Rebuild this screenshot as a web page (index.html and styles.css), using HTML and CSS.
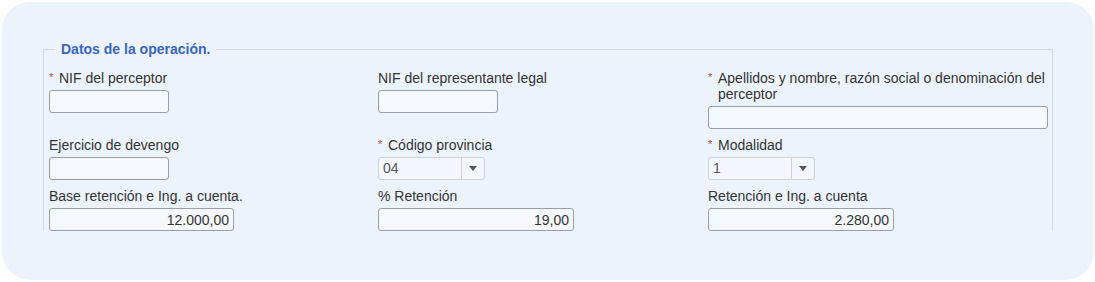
FILE: index.html
```html
<!DOCTYPE html>
<html lang="es">

<head>
    <meta charset="UTF-8">
    <meta name="viewport" content="width=device-width, initial-scale=1.0">
    <title>Datos de la operación</title>
    <link rel="stylesheet" href="styles.css">
</head>

<body>
    <div class="card">
        <fieldset class="group">
            <legend class="group__title">Datos de la operación.</legend>
            <div class="group__grid">
                <div class="field">
                    <label class="field__label"><span class="req">*</span><span>NIF del perceptor</span></label>
                    <input type="text" class="field__input field__input--short">
                </div>
                <div class="field">
                    <label class="field__label"><span>NIF del representante legal</span></label>
                    <input type="text" class="field__input field__input--short">
                </div>
                <div class="field">
                    <label class="field__label"><span class="req">*</span><span>Apellidos y nombre, razón social o denominación del perceptor</span></label>
                    <input type="text" class="field__input field__input--wide">
                </div>

                <div class="field">
                    <label class="field__label"><span>Ejercicio de devengo</span></label>
                    <input type="text" class="field__input field__input--short">
                </div>
                <div class="field">
                    <label class="field__label"><span class="req">*</span><span>Código provincia</span></label>
                    <div class="combo">
                        <span class="combo__value">04</span>
                        <span class="combo__arrow">
                            <svg width="8" height="5" viewBox="0 0 8 5"><path d="M0 0 L8 0 L4 5 Z" fill="#555"/></svg>
                        </span>
                    </div>
                </div>
                <div class="field">
                    <label class="field__label"><span class="req">*</span><span>Modalidad</span></label>
                    <div class="combo">
                        <span class="combo__value">1</span>
                        <span class="combo__arrow">
                            <svg width="8" height="5" viewBox="0 0 8 5"><path d="M0 0 L8 0 L4 5 Z" fill="#555"/></svg>
                        </span>
                    </div>
                </div>

                <div class="field">
                    <label class="field__label"><span>Base retención e Ing. a cuenta.</span></label>
                    <input type="text" class="field__input field__input--num" style="width: 185px" value="12.000,00">
                </div>
                <div class="field">
                    <label class="field__label"><span>% Retención</span></label>
                    <input type="text" class="field__input field__input--num" style="width: 196px" value="19,00">
                </div>
                <div class="field">
                    <label class="field__label"><span>Retención e Ing. a cuenta</span></label>
                    <input type="text" class="field__input field__input--num" style="width: 186px" value="2.280,00">
                </div>
            </div>
        </fieldset>
    </div>
</body>

</html>
```

FILE: styles.css
```css
body {
    margin: 0;
    padding: 0;
    background-color: #fff;
    color: #333;
    font-family: 'Liberation Sans', Arial, sans-serif;
    font-size: 14px;
}

.card {
    margin: 2px 0 0 2px;
    width: 1092px;
    height: 278px;
    box-sizing: border-box;
    padding: 39px 41px 0 41px;
    background-color: #edf3fd;
    border-radius: 28px;
}

.group {
    margin: 0;
    padding: 13px 3px 0 5px;
    border: 1px solid #d3dae4;
    border-bottom: 0;
    min-width: 0;
}

.group__title {
    margin-left: 6px;
    padding: 0 6px;
    line-height: 16px;
    font-size: 14px;
    font-weight: bold;
    color: #3a66bf;
}

.group__grid {
    display: grid;
    grid-template-columns: 329px 330px auto;
    row-gap: 8px;
}

.field__label {
    display: flex;
    line-height: 16px;
    margin-bottom: 4px;
    padding-right: 4px;
}

.req {
    flex: none;
    width: 10px;
    color: #b8443a;
    font-size: 11px;
    line-height: 14px;
}

.field__input {
    display: block;
    box-sizing: border-box;
    height: 23px;
    margin: 0;
    padding: 0 4px;
    border: 1px solid #9a9fa7;
    border-radius: 3px;
    background-color: #f5f8fd;
    font-family: inherit;
    font-size: 14px;
    color: #333;
}

.field__input--short {
    width: 120px;
}

.field__input--wide {
    width: 340px;
}

.field__input--num {
    text-align: right;
}

.combo {
    display: flex;
    box-sizing: border-box;
    width: 107px;
    height: 23px;
    border: 1px solid #cdd3db;
    border-radius: 3px;
    background-color: #f3f7fd;
    color: #555;
}

.combo__value {
    flex: 1;
    padding-left: 4px;
    line-height: 21px;
    border-right: 1px solid #cdd3db;
}

.combo__arrow {
    width: 22px;
    display: flex;
    align-items: center;
    justify-content: center;
}
```
